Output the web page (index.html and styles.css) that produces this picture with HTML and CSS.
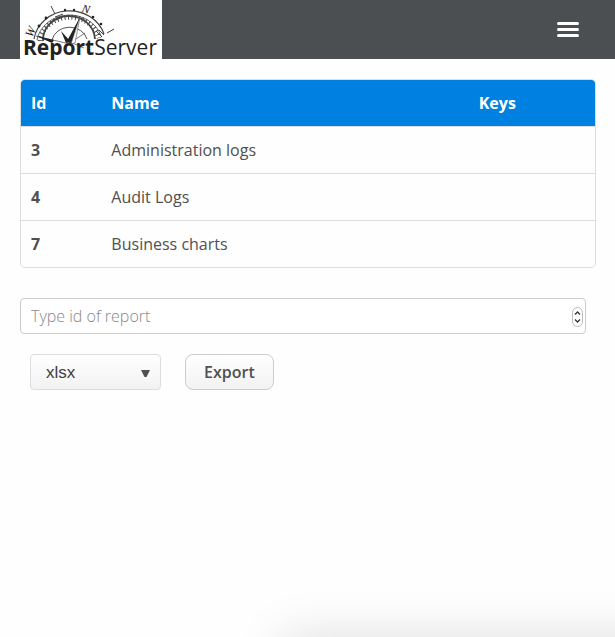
FILE: index.html
```html
<!DOCTYPE html>
<html lang="en">
<head>
<meta charset="utf-8">
<meta name="viewport" content="width=device-width, initial-scale=1">
<title>ReportServer</title>
<link rel="stylesheet" href="styles.css">
</head>
<body>
<header class="topbar">
  <a class="logo" href="#" aria-label="ReportServer">
    <svg width="142" height="61" viewBox="0 0 142 61" aria-hidden="true">
      <g fill="none" stroke="#444">
        <path d="M14 39A36 33 0 0 1 84 34" stroke-width="1.2"/>
        <path d="M17 40A33 30 0 0 1 81 36" stroke-width=".8"/>
        <path d="M20 41A30 27 0 0 1 79 38" stroke-width="5" stroke-dasharray="1 2.600"/>
        <path d="M23 41A26 24 0 0 1 75 39" stroke-width="1.8"/>
        <path d="M32 40A18 16 0 0 1 67 39" stroke-width=".9"/>
        <path d="M31 6l4 8M87 33l7-4" stroke-width="1"/>
        <path d="M16 36l34 8M50 42l14 6M65 33L50 43" stroke-width=".7"/>
        <path d="M76 31l6 6M79 30l5 5M35 17l8-3M36 20l7-3" stroke-width="1"/>
      </g>
      <path d="M60 17L47 41l4 3zM41 31l5 12 5-1zM16 36l16 7 2-3z" fill="#222"/>
      <path d="M60 17l-5 26-4 1z" fill="#fff" stroke="#555" stroke-width=".6"/>
      <g fill="#222">
        <circle cx="19" cy="26" r="1.4"/><circle cx="26" cy="18" r="1.4"/><circle cx="45" cy="10" r="1.2"/><circle cx="54" cy="10" r="1.2"/><circle cx="73" cy="17" r="1.3"/><circle cx="81" cy="24" r="1.3"/>
      </g>
      <text class="compass" transform="translate(61 12) rotate(14)">N</text>
      <text class="compass" transform="translate(12 38) rotate(-65)">W</text>
      <text class="brand" x="3" y="55"><tspan class="brand-bold">Report</tspan><tspan class="brand-light">Server</tspan></text>
    </svg>
  </a>
  <button class="menu" type="button" aria-label="Menu">
    <span class="bar"></span><span class="bar"></span><span class="bar"></span>
  </button>
</header>
<main class="content">
  <table class="reports">
    <thead>
      <tr><th class="col-id" scope="col">Id</th><th class="col-name" scope="col">Name</th><th scope="col">Keys</th></tr>
    </thead>
    <tbody>
      <tr><th scope="row">3</th><td>Administration logs</td><td></td></tr>
      <tr><th scope="row">4</th><td>Audit Logs</td><td></td></tr>
      <tr><th scope="row">7</th><td>Business charts</td><td></td></tr>
    </tbody>
  </table>
  <form class="export">
    <div class="field">
      <input class="report-id" type="number" placeholder="Type id of report" aria-label="Type id of report">
      <svg class="stepper" width="11" height="20" viewBox="0 0 11 20" aria-hidden="true">
        <rect x=".5" y=".5" width="10" height="19" rx="5" fill="#fff" stroke="#bbb"/>
        <path d="M3 7.5L5.500 5 8 7.500M3 12.500L5.500 15 8 12.500" fill="none" stroke="#333" stroke-width="1.300"/>
      </svg>
    </div>
    <div class="actions">
      <div class="format">
        <select class="format-select" aria-label="Format">
          <option>xlsx</option>
        </select>
        <svg class="caret" width="9" height="7" viewBox="0 0 9 7" aria-hidden="true"><path d="M0 0h9L5.500 7h-2z" fill="#505050"/></svg>
      </div>
      <button class="submit" type="button">Export</button>
    </div>
  </form>
</main>
<div class="edge-shadow"></div>
</body>
</html>
```
FILE: styles.css
```css
* {
  box-sizing: border-box;
}

body {
  margin: 0;
  background: #fefefe;
  color: #505050;
  font: 16px/24px "Open Sans", sans-serif;
}

.topbar {
  display: flex;
  align-items: flex-start;
  justify-content: space-between;
  height: 59px;
  padding: 0 36px 0 20px;
  background: #4b4f52;
}

.logo {
  display: block;
  height: 61px;
  background: #fff;
}

.logo svg {
  display: block;
}

.compass {
  font: italic 12px "Liberation Serif", serif;
  fill: #222;
}

.brand {
  font: 21px "Open Sans", sans-serif;
  fill: #222;
}

.brand-bold {
  font-weight: 700;
}

.brand-light {
  font-weight: 400;
}

.menu {
  display: flex;
  flex-direction: column;
  gap: 3px;
  width: 22px;
  margin: 22px 0 0;
  padding: 0;
  border: 0;
  background: none;
}

.bar {
  width: 100%;
  height: 3px;
  border-radius: 2px;
  background: #fff;
}

.content {
  padding: 20px 19px 20px 20px;
}

.reports {
  width: 100%;
  border: 1px solid #ddd;
  border-radius: 5px;
  border-spacing: 0;
  table-layout: fixed;
  overflow: hidden;
}

.reports th,
.reports td {
  height: 47px;
  padding: 0 10px;
  border-top: 1px solid #ddd;
  text-align: left;
}

.reports thead th {
  height: 46px;
  border-top: 0;
  background: #0080e0;
  color: #fff;
}

.col-id {
  width: 14%;
}

.col-name {
  width: 64%;
}

.export {
  margin-top: 30px;
}

.field {
  position: relative;
  margin-right: 10px;
}

.report-id {
  display: block;
  width: 100%;
  height: 36px;
  padding: 0 30px 0 10px;
  border: 1px solid #ccc;
  border-radius: 4px;
  background: #fff;
  color: #505050;
  font: 300 16px/24px "Open Sans", sans-serif;
  appearance: textfield;
}

.report-id::placeholder {
  color: #888;
}

.stepper {
  position: absolute;
  top: 9px;
  right: 3px;
}

.actions {
  display: flex;
  gap: 24px;
  padding: 20px 10px;
}

.format {
  position: relative;
}

.format-select {
  display: block;
  width: 131px;
  height: 36px;
  padding: 0 15px;
  border: 1px solid #ddd;
  border-radius: 4px;
  background: linear-gradient(#fff, #f2f2f2);
  color: #404040;
  font: 17px "Liberation Sans", sans-serif;
  appearance: none;
}

.caret {
  position: absolute;
  top: 16px;
  right: 11px;
  pointer-events: none;
}

.submit {
  height: 36px;
  padding: 0 18px;
  border: 1px solid #ccc;
  border-radius: 8px;
  background: linear-gradient(#fff, #f2f2f2);
  color: #505050;
  font: 600 16px/24px "Open Sans", sans-serif;
}

.edge-shadow {
  position: fixed;
  top: 100%;
  right: -60px;
  left: 46%;
  height: 100px;
  box-shadow: 0 0 50px rgba(0, 0, 0, 0.13);
  pointer-events: none;
}
```
